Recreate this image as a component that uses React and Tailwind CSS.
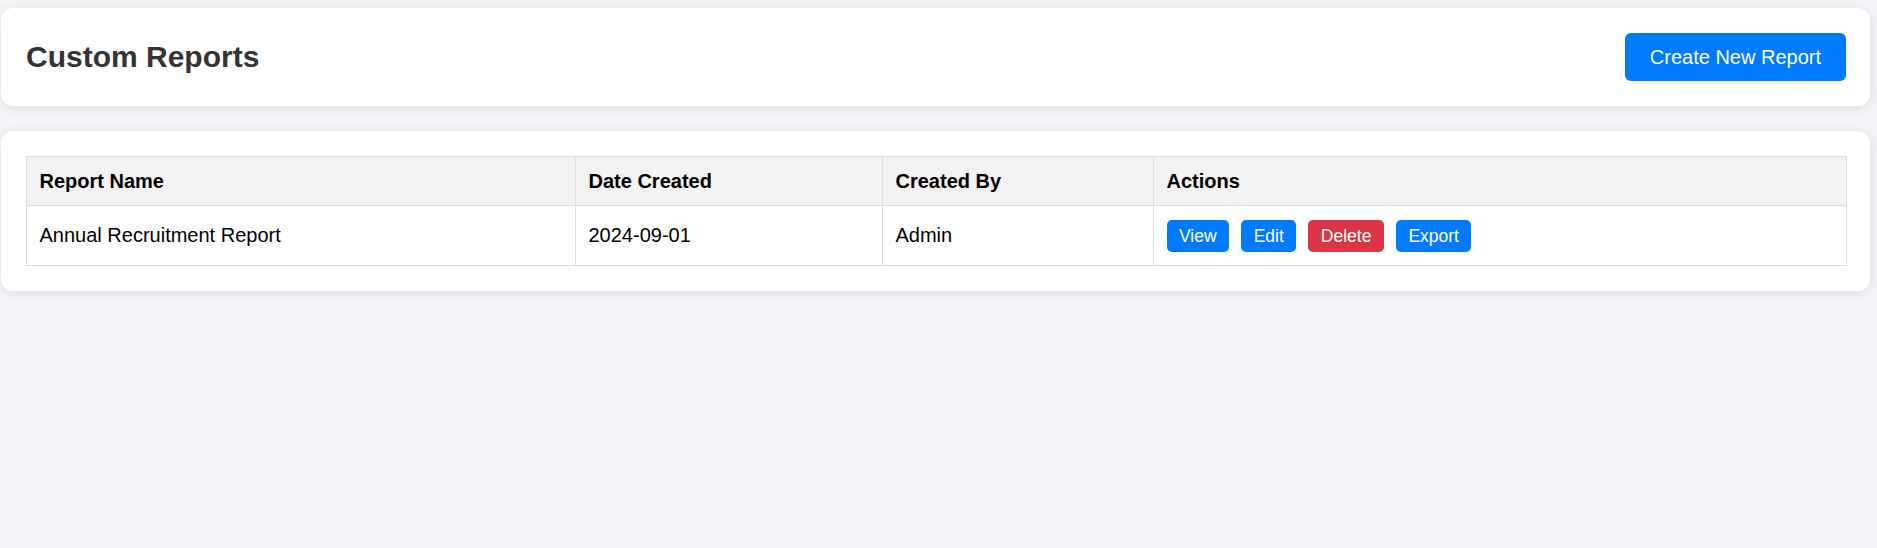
const reports = [
  { name: 'Annual Recruitment Report', date: '2024-09-01', by: 'Admin' },
];

function ActionButton({ label, danger }) {
  return (
    <button
      type="button"
      className={
        'rounded-[5px] px-[12.5px] py-[6px] text-[17.5px] leading-[20px] text-white ' +
        (danger ? 'bg-[#dc3545]' : 'bg-[#007bff]')
      }
    >
      {label}
    </button>
  );
}

export default function App() {
  return (
    <div
      className="min-h-[548px] bg-[#f4f4f8] pl-[1px] pr-[7px] pt-[8px] text-black"
      style={{ fontFamily: '"Liberation Sans", Arial, sans-serif' }}
    >
      <div className="flex flex-col gap-[25px]">
        <header className="flex items-center justify-between rounded-[12px] bg-white p-[25px] pr-[24px] shadow-[0_2px_12px_rgba(0,0,0,0.1)]">
          <h1 className="text-[30px] font-bold leading-[36px] text-[#333]">Custom Reports</h1>
          <button
            type="button"
            className="rounded-[6px] bg-[#007bff] px-[25px] py-[12.5px] text-[20px] leading-[23px] text-white"
          >
            Create New Report
          </button>
        </header>

        <section className="rounded-[12px] bg-white p-[25px] pr-[24px] shadow-[0_2px_12px_rgba(0,0,0,0.1)]">
          <table className="w-full table-fixed border-collapse text-left text-[20px]">
            <colgroup>
              <col className="w-[549px]" />
              <col className="w-[307px]" />
              <col className="w-[271px]" />
              <col className="w-[693px]" />
            </colgroup>
            <thead>
              <tr className="bg-[#f2f2f2]">
                <th className="border border-[#ddd] px-[12.5px] py-[12.5px] font-bold leading-[23px]">Report Name</th>
                <th className="border border-[#ddd] px-[12.5px] py-[12.5px] font-bold leading-[23px]">Date Created</th>
                <th className="border border-[#ddd] px-[12.5px] py-[12.5px] font-bold leading-[23px]">Created By</th>
                <th className="border border-[#ddd] px-[12.5px] py-[12.5px] font-bold leading-[23px]">Actions</th>
              </tr>
            </thead>
            <tbody>
              {reports.map((r) => (
                <tr key={r.name}>
                  <td className="border border-[#ddd] px-[12.5px] py-[13.5px] leading-[23px]">{r.name}</td>
                  <td className="border border-[#ddd] px-[12.5px] py-[13.5px] leading-[23px]">{r.date}</td>
                  <td className="border border-[#ddd] px-[12.5px] py-[13.5px] leading-[23px]">{r.by}</td>
                  <td className="border border-[#ddd] px-[12.5px] py-[13.5px]">
                    <div className="flex gap-[12px]">
                      <ActionButton label="View" />
                      <ActionButton label="Edit" />
                      <ActionButton label="Delete" danger />
                      <ActionButton label="Export" />
                    </div>
                  </td>
                </tr>
              ))}
            </tbody>
          </table>
        </section>
      </div>
    </div>
  );
}
